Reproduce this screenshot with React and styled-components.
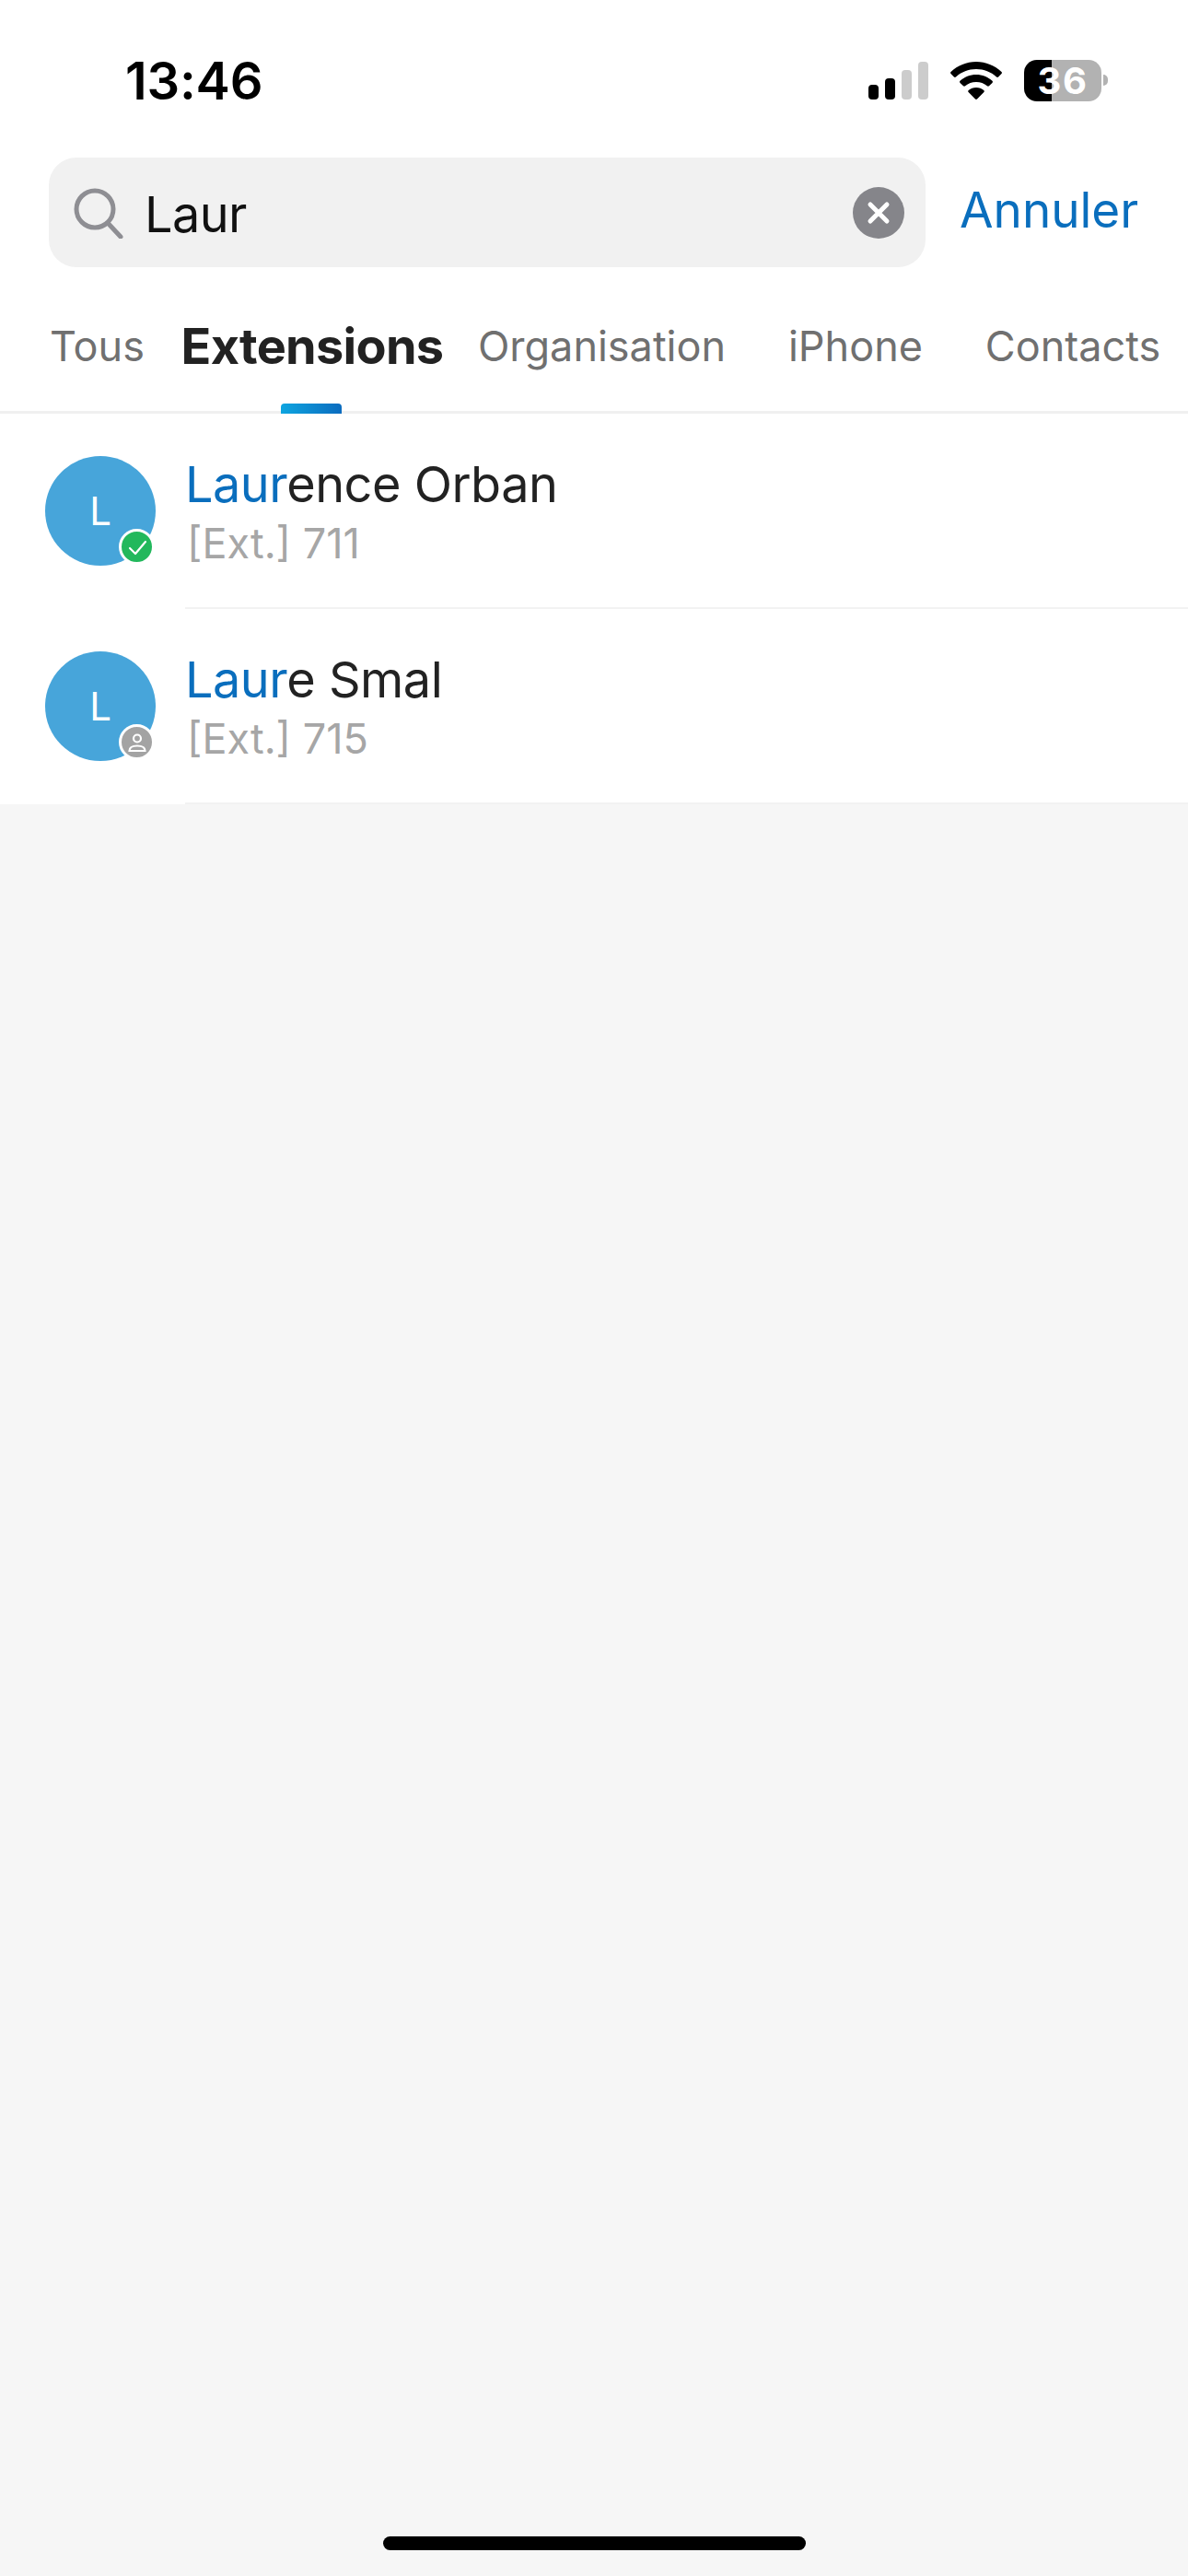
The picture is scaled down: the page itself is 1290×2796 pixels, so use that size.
import React from "react";
import styled, { createGlobalStyle } from "styled-components";

const GlobalStyle = createGlobalStyle`
  html, body {
    margin: 0;
    padding: 0;
    background: #f6f6f6;
  }
  * {
    box-sizing: border-box;
  }
`;

const Page = styled.div`
  position: relative;
  display: flex;
  flex-direction: column;
  width: 1290px;
  height: 2796px;
  overflow: hidden;
  background: #f6f6f6;
  font-family: Inter, "Liberation Sans", sans-serif;
`;

const Header = styled.header`
  background: #ffffff;
  border-bottom: 3px solid #f0f0f0;
`;

const StatusBar = styled.div`
  display: flex;
  align-items: center;
  justify-content: space-between;
  height: 171px;
  padding: 4px 94px 0 136px;
`;

const Time = styled.span`
  font-size: 56px;
  font-weight: 600;
  letter-spacing: -0.2px;
  color: #000000;
`;

const StatusIcons = styled.div`
  display: flex;
  align-items: center;
  gap: 24px;
`;

const Battery = styled.div`
  position: relative;
  display: flex;
  align-items: center;
  justify-content: center;
  width: 84px;
  height: 45px;
  border-radius: 14px;
  background: linear-gradient(90deg, #000000 30px, #b2b2b2 30px);
  color: #ffffff;
  font-size: 40px;
  font-weight: 700;
  letter-spacing: 1.5px;

  &::after {
    content: "";
    position: absolute;
    left: 86px;
    top: 16px;
    width: 5px;
    height: 12px;
    border-radius: 0 6px 6px 0;
    background: #b2b2b2;
  }
`;

const SearchRow = styled.div`
  display: flex;
  align-items: center;
  gap: 37px;
  padding: 0 0 0 53px;
`;

const SearchField = styled.div`
  display: flex;
  align-items: center;
  width: 952px;
  height: 119px;
  padding: 0 23px 0 26px;
  border-radius: 30px;
  background: #f1f1f1;
`;

const SearchText = styled.span`
  flex: 1;
  margin: 3px 0 0 22px;
  font-size: 54px;
  letter-spacing: -0.6px;
  color: #111111;
`;

const CancelButton = styled.span`
  margin-top: -6px;
  font-size: 53px;
  color: #0a6ebd;
`;

const Tabs = styled.nav`
  display: flex;
  align-items: flex-start;
  height: 156px;
  padding: 56px 0 0 36px;
`;

const Tab = styled.div`
  position: relative;
  flex: none;
  width: ${(p) => p.$width}px;
  height: 103px;
  text-align: center;
  font-size: ${(p) => (p.$active ? 54 : 45)}px;
  font-weight: ${(p) => (p.$active ? 700 : 400)};
  line-height: 60px;
  letter-spacing: ${(p) => (p.$active ? "-0.7px" : "0")};
  color: ${(p) => (p.$active ? "#222222" : "#707070")};

  ${(p) =>
    p.$active &&
    `&::after {
      content: "";
      position: absolute;
      left: 130px;
      bottom: 0;
      width: 66px;
      height: 11px;
      border-radius: 4px 4px 0 0;
      background: linear-gradient(90deg, #0ea5e0, #0b6cbf);
    }`}
`;

const List = styled.div`
  display: flex;
  flex-direction: column;
  background: #ffffff;
`;

const Row = styled.div`
  display: flex;
  height: 212px;
  padding-left: 49px;
`;

const Avatar = styled.div`
  position: relative;
  display: flex;
  flex: none;
  align-items: center;
  justify-content: center;
  width: 120px;
  height: 119px;
  margin-top: 46px;
  border-radius: 50%;
  background: #47a5da;
  font-size: 42px;
  color: #ffffff;
`;

const Badge = styled.div`
  position: absolute;
  right: 1px;
  bottom: 1px;
  display: flex;
  align-items: center;
  justify-content: center;
  width: 39px;
  height: 39px;
  border: 3px solid #ffffff;
  border-radius: 50%;
  background: ${(p) => p.$color};
`;

const RowBody = styled.div`
  display: flex;
  flex: 1;
  flex-direction: column;
  margin-left: 32px;
  padding: 44px 0 0 2px;
  border-bottom: 2px solid #f2f2f2;
`;

const Name = styled.div`
  margin-left: -2px;
  font-size: 54px;
  line-height: 66px;
  letter-spacing: -0.5px;
  color: #222222;
`;

const Match = styled.span`
  color: #0a6ebd;
`;

const Extension = styled.div`
  margin-top: 3px;
  font-size: 45px;
  line-height: 56px;
  color: #a6a6a6;
`;

const HomeIndicator = styled.div`
  position: absolute;
  left: 416px;
  bottom: 28px;
  width: 459px;
  height: 15px;
  border-radius: 8px;
  background: #000000;
`;

const SignalIcon = () => (
  <svg width="66" height="42" viewBox="0 0 66 42">
    <rect x="1" y="25" width="11" height="16" rx="4" fill="#000" />
    <rect x="19" y="18" width="11" height="23" rx="4" fill="#000" />
    <rect x="37" y="9" width="11" height="32" rx="4" fill="#cccccc" />
    <rect x="55" y="0" width="11" height="41" rx="4" fill="#cccccc" />
  </svg>
);

const WifiIcon = () => (
  <svg width="56" height="42" viewBox="0 0 56 42" fill="#000">
    <path d="M28 0c10.500 0 20 4 27.500 11 .6.600.6 1.500 0 2.100l-3.400 3.400c-.6.600-1.500.6-2.100 0C44 11 36.500 8 28 8S12 11 6 16.500c-.6.600-1.500.6-2.100 0L.5 13.100c-.6-.6-.6-1.500 0-2.100C8 4 17.500 0 28 0z" />
    <path d="M28 14c6.700 0 12.800 2.500 17.500 6.800.6.600.6 1.500 0 2.100l-3.500 3.400c-.6.600-1.500.6-2.100 0C36.600 23.400 32.500 22 28 22s-8.600 1.400-11.900 4.300c-.6.600-1.500.6-2.100 0l-3.500-3.400c-.6-.6-.6-1.500 0-2.100C15.200 16.500 21.300 14 28 14z" />
    <path d="M28 28c3.200 0 6 1 8.300 2.900.6.500.7 1.400.1 2L29 40.600c-.6.600-1.400.6-2 0l-7.400-7.700c-.6-.6-.5-1.500.1-2C22 29 24.800 28 28 28z" />
  </svg>
);

const SearchIcon = () => (
  <svg width="56" height="56" viewBox="0 0 56 56" fill="none" stroke="#8e8e93" strokeWidth="5" strokeLinecap="round">
    <circle cx="24" cy="24" r="20" />
    <path d="M38 39 L52 54" />
  </svg>
);

const ClearIcon = () => (
  <svg width="56" height="56" viewBox="0 0 56 56">
    <circle cx="28" cy="28" r="28" fill="#85858a" />
    <path d="M19 19 L37 37 M37 19 L19 37" stroke="#fff" strokeWidth="5" strokeLinecap="round" />
  </svg>
);

const CheckIcon = () => (
  <svg width="22" height="22" viewBox="0 0 22 22" fill="none" stroke="#fff" strokeWidth="2.200" strokeLinecap="round" strokeLinejoin="round">
    <path d="M3 12 L9 18 L20 5" />
  </svg>
);

const PersonIcon = () => (
  <svg width="24" height="24" viewBox="0 0 24 24" fill="none" stroke="#fff" strokeWidth="2.200">
    <circle cx="12" cy="7.500" r="4" />
    <path d="M3.500 21 C3.500 16.500 8 15.500 12 15.500 S20.500 16.500 20.500 21 Z" />
  </svg>
);

const contacts = [
  { match: "Laur", rest: "ence Orban", ext: "[Ext.] 711", status: "online" },
  { match: "Laur", rest: "e Smal", ext: "[Ext.] 715", status: "offline" },
];

const tabs = [
  { label: "Tous", width: 139 },
  { label: "Extensions", width: 328, active: true },
  { label: "Organisation", width: 301 },
  { label: "iPhone", width: 250 },
  { label: "Contacts", width: 222 },
];

export default function App() {
  return (
    <Page>
      <GlobalStyle />
      <Header>
        <StatusBar>
          <Time>13:46</Time>
          <StatusIcons>
            <SignalIcon />
            <WifiIcon />
            <Battery>36</Battery>
          </StatusIcons>
        </StatusBar>
        <SearchRow>
          <SearchField>
            <SearchIcon />
            <SearchText>Laur</SearchText>
            <ClearIcon />
          </SearchField>
          <CancelButton>Annuler</CancelButton>
        </SearchRow>
        <Tabs>
          {tabs.map((tab) => (
            <Tab key={tab.label} $width={tab.width} $active={tab.active}>
              {tab.label}
            </Tab>
          ))}
        </Tabs>
      </Header>
      <List>
        {contacts.map((c) => (
          <Row key={c.ext}>
            <Avatar>
              L
              <Badge $color={c.status === "online" ? "#22b85c" : "#a3a3a3"}>
                {c.status === "online" ? <CheckIcon /> : <PersonIcon />}
              </Badge>
            </Avatar>
            <RowBody>
              <Name>
                <Match>{c.match}</Match>
                {c.rest}
              </Name>
              <Extension>{c.ext}</Extension>
            </RowBody>
          </Row>
        ))}
      </List>
      <HomeIndicator />
    </Page>
  );
}
